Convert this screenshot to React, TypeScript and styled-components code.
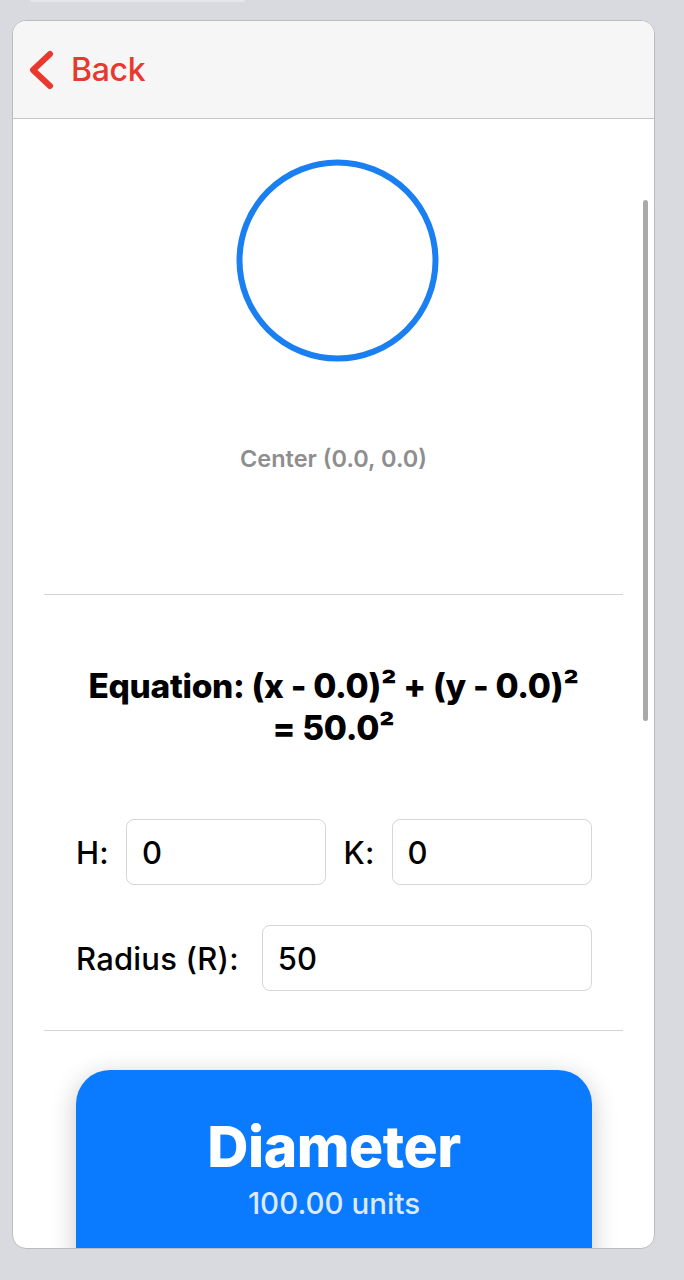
import React from "react";
import styled, { createGlobalStyle } from "styled-components";

const Global = createGlobalStyle`
  html, body { margin: 0; padding: 0; background: #d9dadf; }
  body { font-family: Inter, "Noto Sans", "Liberation Sans", sans-serif; -webkit-font-smoothing: antialiased; }
  * { box-sizing: border-box; }
`;

const Page = styled.div`
  width: 684px;
  height: 1280px;
  display: flex;
  flex-direction: column;
  background: #d9dadf;
  overflow: hidden;
`;

const TopTab = styled.div`
  margin-left: 30px;
  width: 215px;
  height: 2px;
  flex: none;
  background: #e6e6ea;
  border-radius: 0 0 4px 4px;
`;

const Card = styled.div`
  margin: 18px 0 0 12px;
  width: 643px;
  height: 1229px;
  flex: none;
  border: 1px solid #bcbcc0;
  border-radius: 14px;
  background: #ffffff;
  overflow: hidden;
  display: flex;
  flex-direction: column;
`;

const Header = styled.div`
  height: 98px;
  flex: none;
  background: #f6f6f6;
  border-bottom: 1px solid #c4c4c6;
  display: flex;
  align-items: center;
  padding-left: 14px;
  gap: 16px;
`;

const BackText = styled.span`
  color: #e8392e;
  font-size: 32px;
  font-weight: 500;
  letter-spacing: -0.3px;
`;

const Content = styled.div`
  position: relative;
  flex: 1;
  min-height: 0;
  overflow: hidden;
  display: flex;
  flex-direction: column;
  align-items: stretch;
  padding-top: 40px;
  & > * { flex: none; }
`;

const ScrollThumb = styled.div`
  position: absolute;
  right: 6px;
  top: 81px;
  width: 5px;
  height: 521px;
  border-radius: 3px;
  background: #a9a9a9;
`;

const CircleWrap = styled.div`
  display: flex;
  justify-content: center;
  padding-left: 7px;
`;

const CenterLabel = styled.div`
  margin-top: 84px;
  text-align: center;
  color: #8e8e8e;
  font-size: 23.5px;
  font-weight: 600;
  line-height: 26px;
`;

const Divider = styled.div<{ $top: number }>`
  margin: ${(p) => p.$top}px 31px 0 31px;
  height: 1px;
  background: #d4d4d6;
`;

const Equation = styled.div`
  margin-top: 70px;
  text-align: center;
  font-size: 33.5px;
  font-weight: 800;
  line-height: 42px;
  color: #000;
  padding: 0 30px;
  letter-spacing: -0.3px;
`;

const Fields = styled.div`
  margin-top: 70px;
  padding: 0 62px 0 63px;
  display: flex;
  flex-direction: column;
  gap: 40px;
`;

const Row = styled.div`
  display: flex;
  align-items: center;
`;

const Label = styled.span<{ $gap: number }>`
  font-size: 31px;
  font-weight: 500;
  color: #000;
  margin-right: ${(p) => p.$gap}px;
  white-space: nowrap;
  letter-spacing: 0.2px;
`;

const Field = styled.div<{ $gapAfter?: number }>`
  flex: 1;
  height: 66px;
  border: 1px solid #d6d6d8;
  border-radius: 8px;
  display: flex;
  align-items: center;
  padding-left: 15px;
  font-size: 31px;
  font-weight: 500;
  color: #000;
  margin-right: ${(p) => p.$gapAfter ?? 0}px;
`;

const Button = styled.div`
  margin: 39px 62px 0 63px;
  height: 220px;
  background: #0a7aff;
  border-radius: 34px;
  box-shadow: 0 6px 26px rgba(0, 0, 0, 0.22);
  display: flex;
  flex-direction: column;
  align-items: center;
  padding-top: 45px;
`;

const ButtonTitle = styled.div`
  color: #ffffff;
  font-size: 57px;
  font-weight: 800;
  line-height: 64px;
  letter-spacing: -0.5px;
`;

const ButtonSub = styled.div`
  margin-top: 7px;
  color: #dce9ff;
  font-size: 29.5px;
  font-weight: 500;
  line-height: 34px;
`;

export default function App() {
  return (
    <>
      <Global />
      <Page>
        <TopTab />
        <Card>
          <Header>
            <svg width="28" height="40" viewBox="0 0 28 40">
              <path d="M23 4 L6 20 L23 36" fill="none" stroke="#e8392e" strokeWidth="6" strokeLinecap="round" strokeLinejoin="round" />
            </svg>
            <BackText>Back</BackText>
          </Header>
          <Content>
            <ScrollThumb />
            <CircleWrap>
              <svg width="203" height="203" viewBox="0 0 203 203">
                <circle cx="101.5" cy="101.5" r="98" fill="none" stroke="#1a7ff0" strokeWidth="6" />
              </svg>
            </CircleWrap>
            <CenterLabel>Center (0.0, 0.0)</CenterLabel>
            <Divider $top={122} />
            <Equation>
              Equation: (x - 0.0)² + (y - 0.0)²
              <br />= 50.0²
            </Equation>
            <Fields>
              <Row>
                <Label $gap={17}>H:</Label>
                <Field $gapAfter={17}>0</Field>
                <Label $gap={17}>K:</Label>
                <Field>0</Field>
              </Row>
              <Row>
                <Label $gap={23}>Radius (R):</Label>
                <Field>50</Field>
              </Row>
            </Fields>
            <Divider $top={39} />
            <Button>
              <ButtonTitle>Diameter</ButtonTitle>
              <ButtonSub>100.00 units</ButtonSub>
            </Button>
          </Content>
        </Card>
      </Page>
    </>
  );
}
